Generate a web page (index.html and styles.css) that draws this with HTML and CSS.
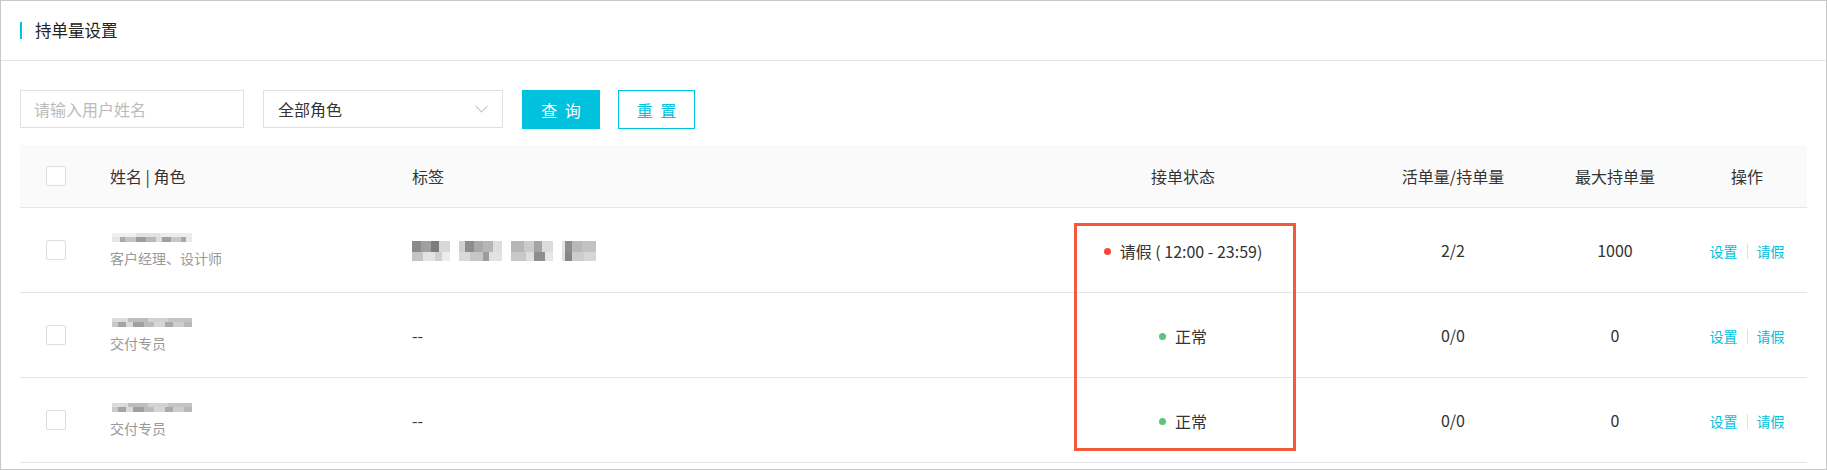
FILE: index.html
```html
<!DOCTYPE html>
<html lang="zh-CN">
<head>
  <meta charset="UTF-8">
  <meta name="viewport" content="width=device-width, initial-scale=1.0">
  <title>持单量设置</title>
  <link rel="stylesheet" href="styles.css">
</head>
<body>
  <div class="panel">
    <div class="panel-head">
      <h2 class="panel-title">持单量设置</h2>
    </div>

    <div class="panel-body">
      <div class="filters">
        <input type="text" class="field" placeholder="请输入用户姓名">
        <div class="select">
          <span>全部角色</span>
          <svg class="arrow" width="13" height="8" viewBox="0 0 13 8">
            <path d="M0.5 0.8 L6.5 7 L12.5 0.8" fill="none" stroke="#c8c8c8" stroke-width="1.1"/>
          </svg>
        </div>
        <button class="btn btn-primary">查 询</button>
        <button class="btn btn-ghost">重 置</button>
      </div>

      <table class="grid">
        <colgroup>
          <col style="width:70px">
          <col style="width:302px">
          <col style="width:611px">
          <col style="width:360px">
          <col style="width:180px">
          <col style="width:144px">
          <col style="width:120px">
        </colgroup>
        <thead>
          <tr>
            <th class="col-check"><span class="checkbox"></span></th>
            <th>姓名 | 角色</th>
            <th>标签</th>
            <th class="center">接单状态</th>
            <th class="center">活单量/持单量</th>
            <th class="center">最大持单量</th>
            <th class="center">操作</th>
          </tr>
        </thead>
        <tbody>
          <tr>
            <td class="col-check"><span class="checkbox"></span></td>
            <td>
              <div class="blur-name"></div>
              <div class="role">客户经理、设计师</div>
            </td>
            <td>
              <div class="tags">
                <span class="blur-tag t1"></span>
                <span class="blur-tag t2"></span>
                <span class="blur-tag t3"></span>
                <span class="blur-tag t4"></span>
              </div>
            </td>
            <td class="center"><span class="status"><i class="dot dot-leave"></i>请假 ( 12:00 - 23:59)</span></td>
            <td class="center">2/2</td>
            <td class="center">1000</td>
            <td class="center"><a href="#" class="op">设置</a><span class="sep"></span><a href="#" class="op">请假</a></td>
          </tr>
          <tr>
            <td class="col-check"><span class="checkbox"></span></td>
            <td>
              <div class="blur-name alt"></div>
              <div class="role">交付专员</div>
            </td>
            <td>--</td>
            <td class="center"><span class="status"><i class="dot dot-ok"></i>正常</span></td>
            <td class="center">0/0</td>
            <td class="center">0</td>
            <td class="center"><a href="#" class="op">设置</a><span class="sep"></span><a href="#" class="op">请假</a></td>
          </tr>
          <tr>
            <td class="col-check"><span class="checkbox"></span></td>
            <td>
              <div class="blur-name alt"></div>
              <div class="role">交付专员</div>
            </td>
            <td>--</td>
            <td class="center"><span class="status"><i class="dot dot-ok"></i>正常</span></td>
            <td class="center">0/0</td>
            <td class="center">0</td>
            <td class="center"><a href="#" class="op">设置</a><span class="sep"></span><a href="#" class="op">请假</a></td>
          </tr>
        </tbody>
      </table>
    </div>

    <!-- annotation frame around the status column -->
    <div class="mark"></div>
  </div>
</body>
</html>
```

FILE: styles.css
```css
* {
  box-sizing: border-box;
  margin: 0;
  padding: 0;
}

body {
  font-family: "Noto Sans CJK SC", "Noto Sans", sans-serif;
  font-size: 16px;
  color: #333;
  background: #fff;
}

.panel {
  position: relative;
  height: 470px;
  border: 1px solid #c8c8c8;
  overflow: hidden;
}

.panel-head {
  height: 60px;
  border-bottom: 1px solid #e5e5e5;
  display: flex;
  align-items: center;
  padding-left: 19px;
}

.panel-title {
  font-size: 16.5px;
  font-weight: normal;
  line-height: 17px;
  color: #222;
  border-left: 2px solid #00c1de;
  padding-left: 13px;
}

.panel-body {
  padding: 29px 19px 0 19px;
}

/* filters */
.filters {
  display: flex;
  align-items: flex-start;
  margin-bottom: 16px;
}

.field {
  width: 224px;
  height: 38px;
  border: 1px solid #e0e0e0;
  padding: 0 13px;
  font-family: inherit;
  font-size: 16px;
  color: #333;
  outline: none;
}

.field::placeholder {
  color: #bbb;
}

.select {
  width: 240px;
  height: 38px;
  margin-left: 19px;
  border: 1px solid #e0e0e0;
  padding: 0 14px 0 14px;
  display: flex;
  align-items: center;
  justify-content: space-between;
  color: #333;
}

.btn {
  height: 39px;
  font-family: inherit;
  font-size: 16px;
  letter-spacing: 2px;
  padding-left: 2px;
  cursor: pointer;
}

.btn-primary {
  width: 78px;
  margin-left: 19px;
  background-color: #00c1de;
  border: none;
  color: #fff;
}

.btn-ghost {
  width: 77px;
  margin-left: 18px;
  background-color: #fff;
  border: 1px solid #00c1de;
  color: #00c1de;
}

/* table */
.grid {
  width: 1787px;
  border-collapse: collapse;
  table-layout: fixed;
}

.grid th {
  height: 62px;
  background-color: #fafafa;
  font-weight: normal;
  text-align: left;
  padding-left: 20px;
  color: #333;
  border-bottom: 1px solid #e5e5e5;
}

.grid td {
  height: 85px;
  padding-left: 20px;
  border-bottom: 1px solid #e5e5e5;
  color: #333;
}

.grid .center {
  text-align: center;
  padding-left: 0;
}

.grid .col-check {
  padding-left: 26px;
}

.checkbox {
  display: block;
  width: 20px;
  height: 20px;
  border: 1px solid #ddd;
  border-radius: 2px;
  background: #fff;
}

.role {
  margin-top: 7px;
  font-size: 14px;
  color: #999;
  line-height: 18px;
}

.blur-name {
  width: 80px;
  height: 9px;
  margin-left: 2px;
  background-image:
    linear-gradient(90deg, #e6e6e6 0 10%, #a9a9a9 10% 16%, #c4c4c4 16% 30%, #9d9d9d 30% 42%, #b8b8b8 42% 55%, #dedede 55% 62%, #a0a0a0 62% 74%, #c8c8c8 74% 86%, #a8a8a8 86% 92%, #e9e9e9 92%),
    linear-gradient(90deg, #f0f0f0 0 30%, #e2e2e2 30% 60%, #ececec 60%);
  background-size: 100% 5px, 100% 100%;
  background-repeat: no-repeat;
  background-position: 0 4px, 0 0;
}

.blur-name.alt {
  background-image:
    linear-gradient(90deg, #c9c9c9 0 8%, #a4a4a4 8% 18%, #d9d9d9 18% 26%, #9f9f9f 26% 40%, #bcbcbc 40% 52%, #d6d6d6 52% 66%, #aaaaaa 66% 76%, #cdcdcd 76% 90%, #b8b8b8 90%),
    linear-gradient(90deg, #dcdcdc 0 20%, #bdbdbd 20% 45%, #d2d2d2 45% 70%, #c4c4c4 70%);
}

.tags {
  display: flex;
  gap: 9px;
}

.blur-tag {
  display: block;
  height: 23px;
  background-repeat: no-repeat;
  background-size: 100% 11px, 100% 12px;
  background-position: 0 3px, 0 14px;
}

.t1 {
  width: 38px;
  background-image:
    linear-gradient(90deg, #8a8a8a 0 25%, #a0a0a0 25% 50%, #7c7c7c 50% 70%, #d8d8d8 70%),
    linear-gradient(90deg, #c4c4c4 0 30%, #e4e4e4 30% 60%, #cfcfcf 60% 80%, #ececec 80%);
}

.t2 {
  width: 43px;
  background-image:
    linear-gradient(90deg, #d0d0d0 0 15%, #8c8c8c 15% 35%, #a8a8a8 35% 55%, #b5b5b5 55% 80%, #dedede 80%),
    linear-gradient(90deg, #dadada 0 25%, #c6c6c6 25% 55%, #9c9c9c 55% 70%, #e2e2e2 70%);
}

.t3 {
  width: 42px;
  background-image:
    linear-gradient(90deg, #b6b6b6 0 30%, #cbcbcb 30% 55%, #a4a4a4 55% 75%, #dcdcdc 75%),
    linear-gradient(90deg, #c8c8c8 0 35%, #dedede 35% 55%, #8e8e8e 55% 80%, #e6e6e6 80%);
}

.t4 {
  width: 34px;
  background-image:
    linear-gradient(90deg, #e4e4e4 0 10%, #8e8e8e 10% 30%, #b8b8b8 30% 60%, #c2c2c2 60%),
    linear-gradient(90deg, #e0e0e0 0 10%, #878787 10% 30%, #cdcdcd 30% 65%, #d6d6d6 65%);
}

.status {
  display: inline-flex;
  align-items: center;
}

.dot {
  display: inline-block;
  width: 7px;
  height: 7px;
  border-radius: 50%;
  margin-right: 9px;
}

.dot-leave {
  background-color: #f5473b;
}

.dot-ok {
  background-color: #5ac57d;
}

.op {
  font-size: 14px;
  color: #00c1de;
  text-decoration: none;
}

.op:hover {
  text-decoration: underline;
}

.sep {
  display: inline-block;
  width: 1px;
  height: 15px;
  margin: 0 9px;
  background-color: #e0e0e0;
  vertical-align: -2px;
}

.mark {
  position: absolute;
  left: 1073px;
  top: 222px;
  width: 222px;
  height: 228px;
  border: 3px solid #f25a3a;
  pointer-events: none;
}
```
